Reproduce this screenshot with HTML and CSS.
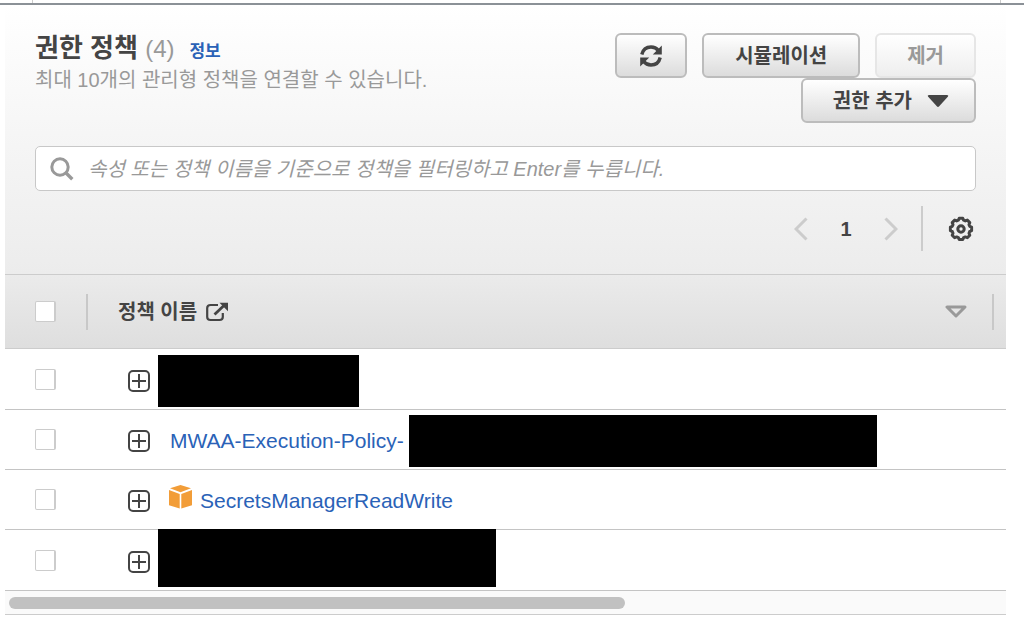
FILE: index.html
```html
<!DOCTYPE html>
<html lang="ko">
<head>
<meta charset="utf-8">
<meta name="viewport" content="width=device-width, initial-scale=1">
<title>권한 정책</title>
<link rel="stylesheet" href="styles.css">
</head>
<body>
<div class="tab-edge"></div>
<main class="panel">
  <header class="panel-header">
    <div class="heading-row">
      <div class="heading">
        <div class="title-line">
          <h1 class="title">권한 정책 <span class="count">(4)</span></h1>
          <a class="info" href="#info">정보</a>
        </div>
        <p class="description">최대 10개의 관리형 정책을 연결할 수 있습니다.</p>
      </div>
      <div class="actions">
        <div class="action-row">
          <button class="btn btn-icon" type="button" aria-label="새로 고침">
            <svg width="24" height="24" viewBox="0 0 24 24" fill="none" stroke="#444" stroke-width="3.4">
              <path d="M2.8 10.5C4 5.5 7.5 3 12 3c3.200 0 5.600 1.300 7.500 3.600M21.200 13.500C20 18.500 16.500 21 12 21c-3.200 0-5.600-1.300-7.500-3.600"/>
              <path fill="#444" stroke="none" d="M22.800 1.500v9h-9zM1.200 22.500v-9h9z"/>
            </svg>
          </button>
          <button class="btn btn-simulate" type="button">시뮬레이션</button>
          <button class="btn btn-remove" type="button" disabled>제거</button>
        </div>
        <button class="btn btn-add" type="button">권한 추가
          <svg width="22" height="14" viewBox="0 0 22 14"><path fill="#444" d="M2 1h18q2 0 .8 1.800L12.200 12.300q-1.200 1.200-2.400 0L1.200 2.800Q0 1 2 1z"/></svg>
        </button>
      </div>
    </div>
    <label class="search">
      <svg width="24" height="24" viewBox="0 0 24 24" fill="none" stroke="#999" stroke-width="3"><circle cx="10" cy="10" r="8.200"/><path d="M15.800 15.800 22.300 22.300" stroke-width="3.400"/></svg>
      <input class="search-input" type="text" aria-label="정책 필터" placeholder="속성 또는 정책 이름을 기준으로 정책을 필터링하고 Enter를 누릅니다.">
    </label>
    <nav class="pagination">
      <button class="page-btn" type="button" aria-label="이전">
        <svg width="14" height="24" viewBox="0 0 14 24" fill="none" stroke="#ccc" stroke-width="3"><path d="M12.500 1.500 2 12l10.500 10.500"/></svg>
      </button>
      <span class="page-number">1</span>
      <button class="page-btn" type="button" aria-label="다음">
        <svg width="14" height="24" viewBox="0 0 14 24" fill="none" stroke="#ccc" stroke-width="3"><path d="M1.500 1.500 12 12 1.500 22.500"/></svg>
      </button>
      <span class="divider"></span>
      <button class="page-btn" type="button" aria-label="설정">
        <svg width="26" height="26" viewBox="0 0 26 26" fill="none" stroke="#444"><path stroke-width="3" stroke-linejoin="round" d="M10.400 4.200 11.200 2.300h3.600l.8 1.900 1.700.7 2-.8 2.500 2.500-.8 2 .7 1.700 1.900.8v3.600l-1.900.8-.7 1.700.8 2-2.500 2.500-2-.8-1.700.7-.8 1.900h-3.600l-.8-1.900-1.700-.7-2 .8-2.500-2.500.8-2-.7-1.700-1.900-.8v-3.600l1.900-.8.7-1.700-.8-2 2.500-2.500 2 .8z"/><circle cx="13" cy="13" r="3.200" stroke-width="3"/></svg>
      </button>
    </nav>
  </header>

  <table class="policies">
    <thead>
      <tr>
        <th class="select-cell"><div class="head-select"><input class="check" type="checkbox" aria-label="모두 선택"></div></th>
        <th class="name-cell">
          <div class="head-name">
            <span>정책 이름</span>
            <svg class="external" width="22" height="20" viewBox="0 0 22 20" fill="none" stroke="#444" stroke-width="2.200"><path d="M12 3H4.500Q1.200 3 1.200 6v9q0 3 3.300 3h9q3.300 0 3.300-3v-4"/><path stroke-width="2.800" d="M8.500 12.500 18 3.500"/><path fill="#444" stroke="none" d="M13.500.8H22v8.500z"/></svg>
            <svg class="sort" width="22" height="13" viewBox="0 0 22 13" fill="none" stroke="#999" stroke-width="3" stroke-linejoin="round"><path d="M2 2h18l-9 9z"/></svg>
          </div>
        </th>
        <th class="end-cell"></th>
      </tr>
    </thead>
    <tbody>
      <tr>
        <td class="select-cell"><input class="check" type="checkbox" aria-label="정책 1 선택"></td>
        <td class="name-cell" colspan="2">
          <div class="policy">
            <button class="expand" type="button" aria-label="펼치기"><svg width="22" height="22" viewBox="0 0 22 22" fill="none" stroke="#444" stroke-width="2"><rect x="1" y="1" width="20" height="20" rx="4"/><path d="M4 11h14M11 4v14"/></svg></button>
            <span class="mask mask-short"></span>
          </div>
        </td>
      </tr>
      <tr>
        <td class="select-cell"><input class="check" type="checkbox" aria-label="정책 2 선택"></td>
        <td class="name-cell" colspan="2">
          <div class="policy">
            <button class="expand" type="button" aria-label="펼치기"><svg width="22" height="22" viewBox="0 0 22 22" fill="none" stroke="#444" stroke-width="2"><rect x="1" y="1" width="20" height="20" rx="4"/><path d="M4 11h14M11 4v14"/></svg></button>
            <a class="policy-link" href="#mwaa">MWAA-Execution-Policy-</a>
            <span class="mask mask-long"></span>
          </div>
        </td>
      </tr>
      <tr>
        <td class="select-cell"><input class="check" type="checkbox" aria-label="정책 3 선택"></td>
        <td class="name-cell" colspan="2">
          <div class="policy">
            <button class="expand" type="button" aria-label="펼치기"><svg width="22" height="22" viewBox="0 0 22 22" fill="none" stroke="#444" stroke-width="2"><rect x="1" y="1" width="20" height="20" rx="4"/><path d="M4 11h14M11 4v14"/></svg></button>
            <svg class="cube" width="23" height="24" viewBox="0 0 23 24" fill="#f29d38"><path d="M11.500 0 22 3.300 11.500 7.200 1 3.300zM0 5l10.700 3.900V23.500L0 20.300zM23 5l-10.700 3.900V23.500L23 20.300z"/></svg>
            <a class="policy-link managed" href="#secrets">SecretsManagerReadWrite</a>
          </div>
        </td>
      </tr>
      <tr>
        <td class="select-cell"><input class="check" type="checkbox" aria-label="정책 4 선택"></td>
        <td class="name-cell" colspan="2">
          <div class="policy">
            <button class="expand" type="button" aria-label="펼치기"><svg width="22" height="22" viewBox="0 0 22 22" fill="none" stroke="#444" stroke-width="2"><rect x="1" y="1" width="20" height="20" rx="4"/><path d="M4 11h14M11 4v14"/></svg></button>
            <span class="mask mask-medium"></span>
          </div>
        </td>
      </tr>
    </tbody>
  </table>
  <div class="scroll-track"><div class="scroll-thumb"></div></div>
</main>
</body>
</html>
```
FILE: styles.css
```css
* { box-sizing: border-box; }

body {
  margin: 0;
  background: #fff;
  color: #444;
  font: 20px/28px "Liberation Sans", "Noto Sans CJK KR", sans-serif;
}

svg { display: block; flex: none; }
a { color: #2a62b7; text-decoration: none; }
button, input { font: inherit; color: inherit; margin: 0; }

.tab-edge {
  display: flex;
  height: 5px;
  padding: 0 23px 0 32px;
  border-bottom: 2px solid #8b9197;
}
.tab-edge::before {
  content: "";
  flex: 1;
  border: solid #ccc;
  border-width: 0 1px;
}

.panel { margin: 0 18px 0 5px; }

.panel-header {
  padding: 28px 30px 23px;
  background: linear-gradient(#fff, #ececec);
}
.heading-row {
  display: flex;
  justify-content: space-between;
}
.title-line {
  display: flex;
  align-items: baseline;
  gap: 15px;
}
.title {
  margin: 0;
  font-size: 26px;
  line-height: 30px;
}
.count {
  color: #999;
  font-size: 24px;
  font-weight: 400;
}
.info { font-size: 17px; font-weight: 700; }
.description { margin: 0; color: #999; }

.actions {
  display: flex;
  flex-direction: column;
  align-items: flex-end;
}
.action-row { display: flex; gap: 15px; }

.btn {
  display: flex;
  align-items: center;
  justify-content: center;
  height: 45px;
  padding: 0 30px;
  border: 2px solid #bcbcbc;
  border-radius: 6px;
  background: linear-gradient(#fff, #dcdcdc);
  font-weight: 700;
}
.btn-icon { padding: 0 22px; }
.btn-simulate { padding: 0 31px; }
.btn-remove {
  border-color: #e6e6e6;
  background: linear-gradient(#fff, #eee);
  color: #999;
}
.btn-add { gap: 15px; padding: 0 25px 0 30px; }

.search {
  display: flex;
  align-items: center;
  gap: 14px;
  height: 45px;
  margin-top: 23px;
  padding: 0 14px;
  border: 1px solid #c8c8c8;
  border-radius: 5px;
  background: #fff;
}
.search-input {
  flex: 1;
  min-width: 0;
  padding: 0;
  border: 0;
  outline: 0;
  background: none;
}
.search-input::placeholder {
  color: #999;
  font-style: italic;
  opacity: 1;
}

.pagination {
  display: flex;
  align-items: center;
  justify-content: flex-end;
  height: 45px;
  margin-top: 15px;
  padding-right: 2px;
}
.page-btn { padding: 0; border: 0; background: none; }
.page-number {
  width: 76px;
  text-align: center;
  font-weight: 700;
}
.divider {
  height: 45px;
  margin: 0 25px 0 23px;
  border-left: 2px solid #ccc;
}

.policies {
  width: 100%;
  border-collapse: separate;
  border-spacing: 0;
}
.policies th {
  height: 75px;
  padding: 0;
  border: solid #ccc;
  border-width: 1px 0;
  text-align: left;
}
.policies thead tr { background: linear-gradient(#ebebeb, #dedede); }
.policies td {
  height: 60px;
  padding: 0;
  border-bottom: 1px solid #c4c4c4;
}
.policies tbody tr:first-child td,
.policies tbody tr:last-child td { height: 61px; }
.select-cell { width: 83px; }
td.select-cell, .head-select { padding-left: 30px; }
.head-select, .head-name {
  display: flex;
  align-items: center;
  height: 36px;
  border-right: 2px solid #c8c8c8;
}
.head-name { padding: 0 25px 0 30px; }
.external { margin-left: 9px; }
.sort { margin-left: auto; }
.end-cell { width: 12px; }

.check {
  display: block;
  appearance: none;
  width: 21px;
  height: 21px;
  border: 1px solid #ccc;
  border-right-width: 2px;
  border-radius: 2px;
  background: #fff;
}

.policy {
  display: flex;
  align-items: center;
  height: 59px;
  padding: 3px 0 0 40px;
}
.expand {
  width: 22px;
  padding: 0;
  border: 0;
  background: none;
}
.policy-link { margin-left: 20px; font-size: 21px; }
.cube { margin: 0 0 8px 19px; }
.managed { margin-left: 8px; }
.mask {
  height: 52px;
  margin-left: 8px;
  background: #000;
}
.mask-short { width: 201px; }
.mask-long { width: 468px; margin-left: 5px; }
.mask-medium {
  width: 338px;
  height: 58px;
  margin-top: -7px;
}

.scroll-track {
  height: 24px;
  padding: 6px 4px;
  border-bottom: 1px solid #ccc;
  background: #fafafa;
}
.scroll-thumb {
  width: 62%;
  height: 12px;
  border-radius: 6px;
  background: #c1c1c1;
}
```
